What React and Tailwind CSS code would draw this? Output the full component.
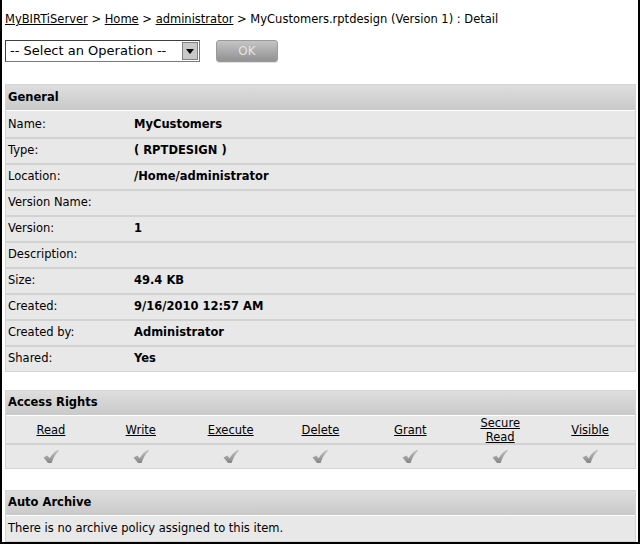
import React from 'react';

const GENERAL = [
  ['Name:', 'MyCustomers'],
  ['Type:', '( RPTDESIGN )'],
  ['Location:', '/Home/administrator'],
  ['Version Name:', ''],
  ['Version:', '1'],
  ['Description:', ''],
  ['Size:', '49.4 KB'],
  ['Created:', '9/16/2010 12:57 AM'],
  ['Created by:', 'Administrator'],
  ['Shared:', 'Yes'],
];

const RIGHTS = ['Read', 'Write', 'Execute', 'Delete', 'Grant', 'Secure Read', 'Visible'];

function PanelHeader({ title, h = 'h-[25px]' }) {
  return (
    <div className={`${h} flex items-center pl-[2px] font-bold bg-gradient-to-b from-[#dedede] to-[#c9c9c9] border-b border-white`}>
      {title}
    </div>
  );
}

function Row({ children }) {
  return (
    <div className="h-[26px] flex items-center bg-[#e8e8e8] border-t-2 border-t-[#d2d2d2] first:border-t-0 first:h-[25px]">
      {children}
    </div>
  );
}

// grey tick used in the access-rights grid
function Check() {
  return (
    <svg width="16" height="15" viewBox="0 0 16 15">
      <defs>
        <linearGradient id="ck" x1="0" y1="0" x2="0" y2="1">
          <stop offset="0" stopColor="#c6c6c6" />
          <stop offset="1" stopColor="#858585" />
        </linearGradient>
      </defs>
      <path d="M0.5 8.6 L4.4 6.4 L6.6 9.2 C8.8 5.4 11.8 2.4 15.6 0.6 L15.6 2.2 C12.4 5 10.2 9 8.6 14 L5 14 Z" fill="url(#ck)" />
    </svg>
  );
}

export default function App() {
  return (
    <div className="w-[640px] h-[544px] bg-white border-x-2 border-b-2 border-black text-black text-[11.5px] font-['DejaVu_Sans',sans-serif] overflow-hidden">
      <div className="pl-[3px] pt-[12px] h-[27px] leading-[14px]">
        <a className="underline">MyBIRTiServer</a> &gt; <a className="underline">Home</a> &gt;{' '}
        <a className="underline">administrator</a> &gt; MyCustomers.rptdesign (Version 1) : Detail
      </div>

      <div className="flex items-center pl-[3px] mt-[13px] gap-[16px]">
        <div className="w-[195px] h-[22px] flex border border-[#7a7a7a] border-t-[#404040] border-l-[#404040] bg-white">
          <div className="flex-1 flex items-center pl-[4px] text-[13px]">-- Select an Operation --</div>
          <div className="w-[16px] m-[1px] bg-[#c8c8c8] border border-[#808080] flex items-center justify-center">
            <svg width="8" height="5" viewBox="0 0 8 5"><path d="M0 0h8L4 5z" fill="#000" /></svg>
          </div>
        </div>
        <div className="w-[62px] h-[22px] rounded-[3px] border border-[#9a9a9a] bg-gradient-to-b from-[#c4c4c4] to-[#929292] shadow-[0_1px_0_#e0e0e0] flex items-center justify-center text-[#e4e4e4] text-[12px]">
          OK
        </div>
      </div>

      <div className="ml-[3px] mr-[2px] mt-[22px] border border-[#d4d4d4]">
        <PanelHeader title="General" h="h-[26px]" />
        <div className="bg-[#e8e8e8] pt-[1px]">
          {GENERAL.map(([k, v]) => (
            <Row key={k}>
              <div className="w-[128px] pl-[2px]">{k}</div>
              <div className="font-bold">{v}</div>
            </Row>
          ))}
        </div>
      </div>

      <div className="ml-[3px] mr-[2px] mt-[18px] border border-[#d4d4d4]">
        <PanelHeader title="Access Rights" />
        <div className="h-[29px] grid grid-cols-7 bg-[#e8e8e8] border-b-2 border-b-[#d2d2d2]">
          {RIGHTS.map(r => (
            <div key={r} className="flex items-center justify-center text-center leading-[14px]">
              <a className="underline w-[62px]">{r}</a>
            </div>
          ))}
        </div>
        <div className="h-[23px] grid grid-cols-7 bg-[#e8e8e8]">
          {RIGHTS.map(r => (
            <div key={r} className="flex items-center justify-center">
              <Check />
            </div>
          ))}
        </div>
      </div>

      <div className="ml-[3px] mr-[2px] mt-[21px] border border-[#d4d4d4]">
        <PanelHeader title="Auto Archive" />
        <div className="h-[25px] flex items-center pl-[2px] bg-[#e8e8e8]">
          There is no archive policy assigned to this item.
        </div>
      </div>
    </div>
  );
}
